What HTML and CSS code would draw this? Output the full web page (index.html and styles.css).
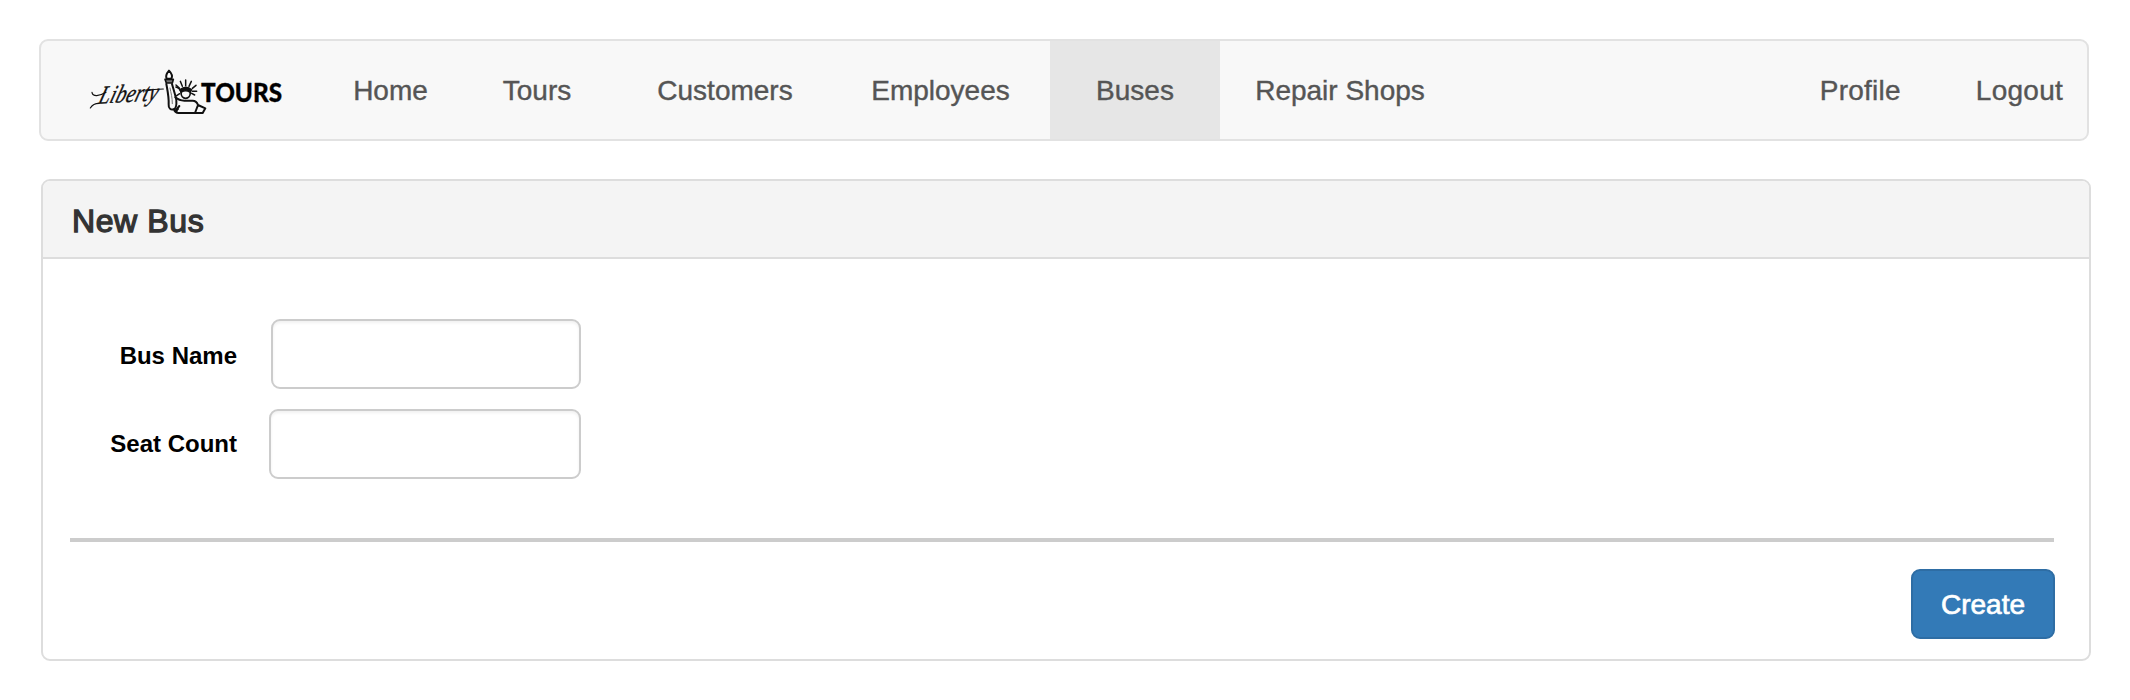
FILE: index.html
```html
<!DOCTYPE html>
<html lang="en">
<head>
<meta charset="utf-8">
<title>New Bus</title>
<link rel="stylesheet" href="styles.css">
</head>
<body>
<nav class="navbar">
  <a class="brand" href="#" aria-label="Liberty Tours">
    <svg class="brand-logo" viewBox="30 27 576 138" fill="none" stroke="#111" stroke-linecap="round" stroke-linejoin="round">
      <text class="logo-script" transform="translate(52 131) rotate(-3) skewX(-20)" textLength="176" lengthAdjust="spacingAndGlyphs">Liberty</text>
      <path d="M36 97c2 14 22 12 42 0M31 144c6-10 14-14 26-14M196 93c18-4 34-6 54-6" stroke-width="3.5"/>
      <text class="logo-bold" x="363" y="127" textLength="243" lengthAdjust="spacingAndGlyphs">TOURS</text>
      <path d="M260 56c-5-10 1-17 7-24 7 7 13 14 7 24z" fill="#fff" stroke-width="6"/>
      <path d="M255 58h25l-3 11h-18z" fill="#777" stroke-width="5"/>
      <path d="M259 72c4 22 8 40 7 61-1 11 6 18 15 15 8-3 9-13 8-27M276 72c4 15 9 28 13 48" stroke-width="6"/>
      <path d="M270 84c3 16 7 27 7 47" stroke-width="3" stroke="#777"/>
      <path d="M288 81c9 3 14 8 15 16 0 11 6 18 14 18s14-7 14-18" stroke-width="5"/>
      <path d="M299 89c12-9 26-9 36 0l-5 8c-8-6-18-6-26 0z" fill="#111" stroke-width="4"/>
      <path d="M317 77V60M307 79l-6-15M327 79l7-15M298 84l-10-9M337 85l11-9M337 94h13M335 100l9 5M299 101l-9 6" stroke-width="4.5"/>
      <path d="M286 112c10 9 16 10 27 10h25c8 0 13 4 16 13l-9 24h-50c-8 0-6-9-1-12M354 135l22 10-8 14h-22M298 138l-10 12M282 148c2 8 7 11 14 11" stroke-width="6"/>
    </svg>
  </a>
  <div class="nav-links">
    <a href="#">Home</a>
    <a href="#">Tours</a>
    <a href="#">Customers</a>
    <a href="#">Employees</a>
    <a class="active" href="#">Buses</a>
    <a href="#">Repair Shops</a>
  </div>
  <div class="nav-account">
    <a href="#">Profile</a>
    <a href="#">Logout</a>
  </div>
</nav>
<main class="panel">
  <h1 class="panel-heading">New Bus</h1>
  <form class="panel-body">
    <div class="field field-name">
      <label for="bus-name">Bus Name</label>
      <input id="bus-name" type="text">
    </div>
    <div class="field field-seats">
      <label for="seat-count">Seat Count</label>
      <input id="seat-count" type="text">
    </div>
    <hr class="divider">
    <button class="create" type="button">Create</button>
  </form>
</main>
</body>
</html>
```

FILE: styles.css
```css
* {
  box-sizing: border-box;
}

body {
  margin: 0;
  padding: 39px 39px 0;
  background: #fff;
  font-family: "Liberation Sans", Arial, sans-serif;
}

.navbar {
  display: flex;
  width: 2050px;
  height: 102px;
  background: #f8f8f8;
  border: 2px solid #e2e2e2;
  border-radius: 9px;
  font-size: 28px;
}

.navbar a {
  color: #555;
  text-decoration: none;
  -webkit-text-stroke: 0.4px #555;
}

.brand {
  display: flex;
  align-items: center;
  width: 285px;
  padding: 4px 0 0 49px;
}

.brand-logo {
  width: 192px;
  height: 46px;
  overflow: visible;
}

.navbar .logo-script {
  font: italic 76px "Liberation Serif", serif;
  fill: #111;
  -webkit-text-stroke: 2px #111;
}

.navbar .logo-bold {
  font: 900 77px Lato, sans-serif;
  fill: #000;
  -webkit-text-stroke: 2.5px #000;
}

.nav-links {
  display: grid;
  grid-template-columns: 129px 164px 212px 219px 170px 240px;
}

.nav-links a {
  display: flex;
  align-items: center;
  justify-content: center;
  padding-top: 2px;
}

.nav-links .active {
  background: #e6e6e6;
}

.nav-account {
  display: flex;
  align-items: center;
  gap: 75px;
  margin-left: auto;
  padding: 2px 24px 0 0;
  letter-spacing: 0.25px;
}

.panel {
  width: 2050px;
  height: 482px;
  margin: 38px 0 0 2px;
  border: 2px solid #ddd;
  border-radius: 9px;
  overflow: hidden;
}

.panel-heading {
  height: 78px;
  margin: 0;
  padding-left: 29px;
  background: #f4f4f4;
  border-bottom: 2px solid #ddd;
  color: #333;
  font-size: 32px;
  font-weight: 400;
  line-height: 80px;
  letter-spacing: 0.6px;
  -webkit-text-stroke: 1.3px #333;
}

.panel-body {
  display: flex;
  flex-direction: column;
  padding: 60px 34px 0 27px;
}

.field {
  display: flex;
  align-items: center;
  justify-content: space-between;
  width: 511px;
  height: 70px;
}

.field-seats {
  margin-top: 20px;
}

.field label {
  width: 167px;
  color: #000;
  font-size: 24px;
  font-weight: 700;
  text-align: right;
}

.field-name label {
  padding-top: 3px;
}

.field input {
  width: 310px;
  height: 70px;
  padding: 0 20px;
  border: 2px solid #ccc;
  border-radius: 9px;
  background: #fff;
  box-shadow: inset 0 2px 3px rgba(0, 0, 0, 0.06);
  font-size: 28px;
}

.field-seats input {
  width: 312px;
}

.divider {
  width: 1984px;
  height: 4px;
  margin: 59px 0 27px;
  border: 0;
  background: #ccc;
}

.create {
  align-self: flex-end;
  width: 144px;
  height: 70px;
  padding: 1px 0 0;
  border: 2px solid #2e6da4;
  border-radius: 9px;
  background: #337ab7;
  color: #fff;
  font-family: inherit;
  font-size: 28px;
  -webkit-text-stroke: 0.7px #fff;
}
```
